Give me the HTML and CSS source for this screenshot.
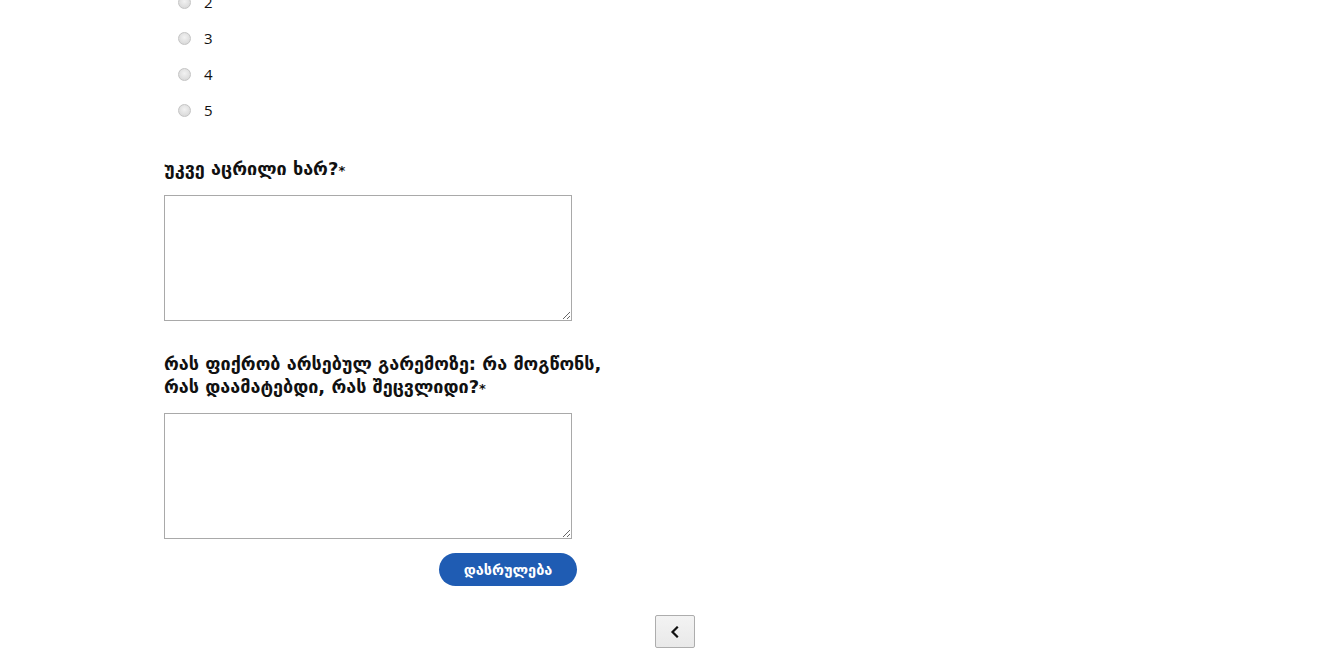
FILE: index.html
```html
<!DOCTYPE html>
<html lang="ka">
<head>
<meta charset="utf-8">
<title>გამოკითხვა</title>
<link rel="stylesheet" href="styles.css">
</head>
<body>
<form class="survey">
  <ul class="options">
    <li class="option"><span class="radio"></span><span class="opt-label">1</span></li>
    <li class="option"><span class="radio"></span><span class="opt-label">2</span></li>
    <li class="option"><span class="radio"></span><span class="opt-label">3</span></li>
    <li class="option"><span class="radio"></span><span class="opt-label">4</span></li>
    <li class="option"><span class="radio"></span><span class="opt-label">5</span></li>
  </ul>

  <div class="question q-first">
    <label class="q-title">უკვე აცრილი ხარ?<span class="req">*</span></label>
    <textarea class="answer"></textarea>
  </div>

  <div class="question">
    <label class="q-title">რას ფიქრობ არსებულ გარემოზე: რა მოგწონს, რას დაამატებდი, რას შეცვლიდი?<span class="req">*</span></label>
    <textarea class="answer"></textarea>
  </div>

  <div class="actions">
    <button type="button" class="finish">დასრულება</button>
  </div>

  <div class="pager">
    <button type="button" class="prev" aria-label="წინა">
      <svg width="10" height="12" viewBox="0 0 10 12"><path d="M7 1.5 L2.5 6 L7 10.5" fill="none" stroke="#111" stroke-width="2.2" stroke-linecap="square"/></svg>
    </button>
  </div>
</form>
</body>
</html>
```

FILE: styles.css
```css
html, body {
  margin: 0;
  padding: 0;
  background: #fff;
}

body {
  font-family: "Open Sans", "DejaVu Sans", sans-serif;
  color: #111;
  overflow: hidden;
}

.survey {
  padding-left: 164px;
  margin-top: -52px;
}

.options {
  list-style: none;
  margin: 0;
  padding: 0 0 0 14px;
}

.option {
  height: 36px;
  display: flex;
  align-items: center;
  gap: 13px;
}

.radio {
  width: 11px;
  height: 11px;
  border-radius: 50%;
  border: 1px solid #c4c4c4;
  background: radial-gradient(circle at 50% 40%, #f2f2f2 0%, #dcdcdc 70%, #d0d0d0 100%);
}

.opt-label {
  font-size: 15px;
  line-height: 18px;
  color: #111;
}

.question {
  margin-top: 31px;
  width: 450px;
}

.q-first {
  margin-top: 29px;
}

.q-title {
  display: block;
  font-family: "DejaVu Sans", sans-serif;
  font-weight: bold;
  font-size: 18px;
  line-height: 23px;
  color: #111;
  margin-bottom: 15px;
}

.req {
  font-size: 13px;
  line-height: 1;
}

.answer {
  display: block;
  box-sizing: border-box;
  width: 408px;
  height: 126px;
  margin: 0;
  border: 1px solid #a9a9a9;
  border-radius: 0;
  resize: both;
  font: inherit;
}

.actions {
  width: 413px;
  display: flex;
  justify-content: flex-end;
  margin-top: 14px;
}

.finish {
  width: 138px;
  height: 33px;
  border: none;
  border-radius: 17px;
  background: #1f5cb3;
  color: #fff;
  font-family: "DejaVu Sans", sans-serif;
  font-weight: bold;
  font-size: 14.5px;
  padding: 0;
}

.pager {
  margin-top: 29px;
  padding-left: 491px;
}

.prev {
  width: 40px;
  height: 33px;
  box-sizing: border-box;
  border: 1px solid #adadad;
  border-radius: 2px;
  background: linear-gradient(#f3f3f3, #e9e9e9);
  display: flex;
  align-items: center;
  justify-content: center;
  padding: 0;
}
```
